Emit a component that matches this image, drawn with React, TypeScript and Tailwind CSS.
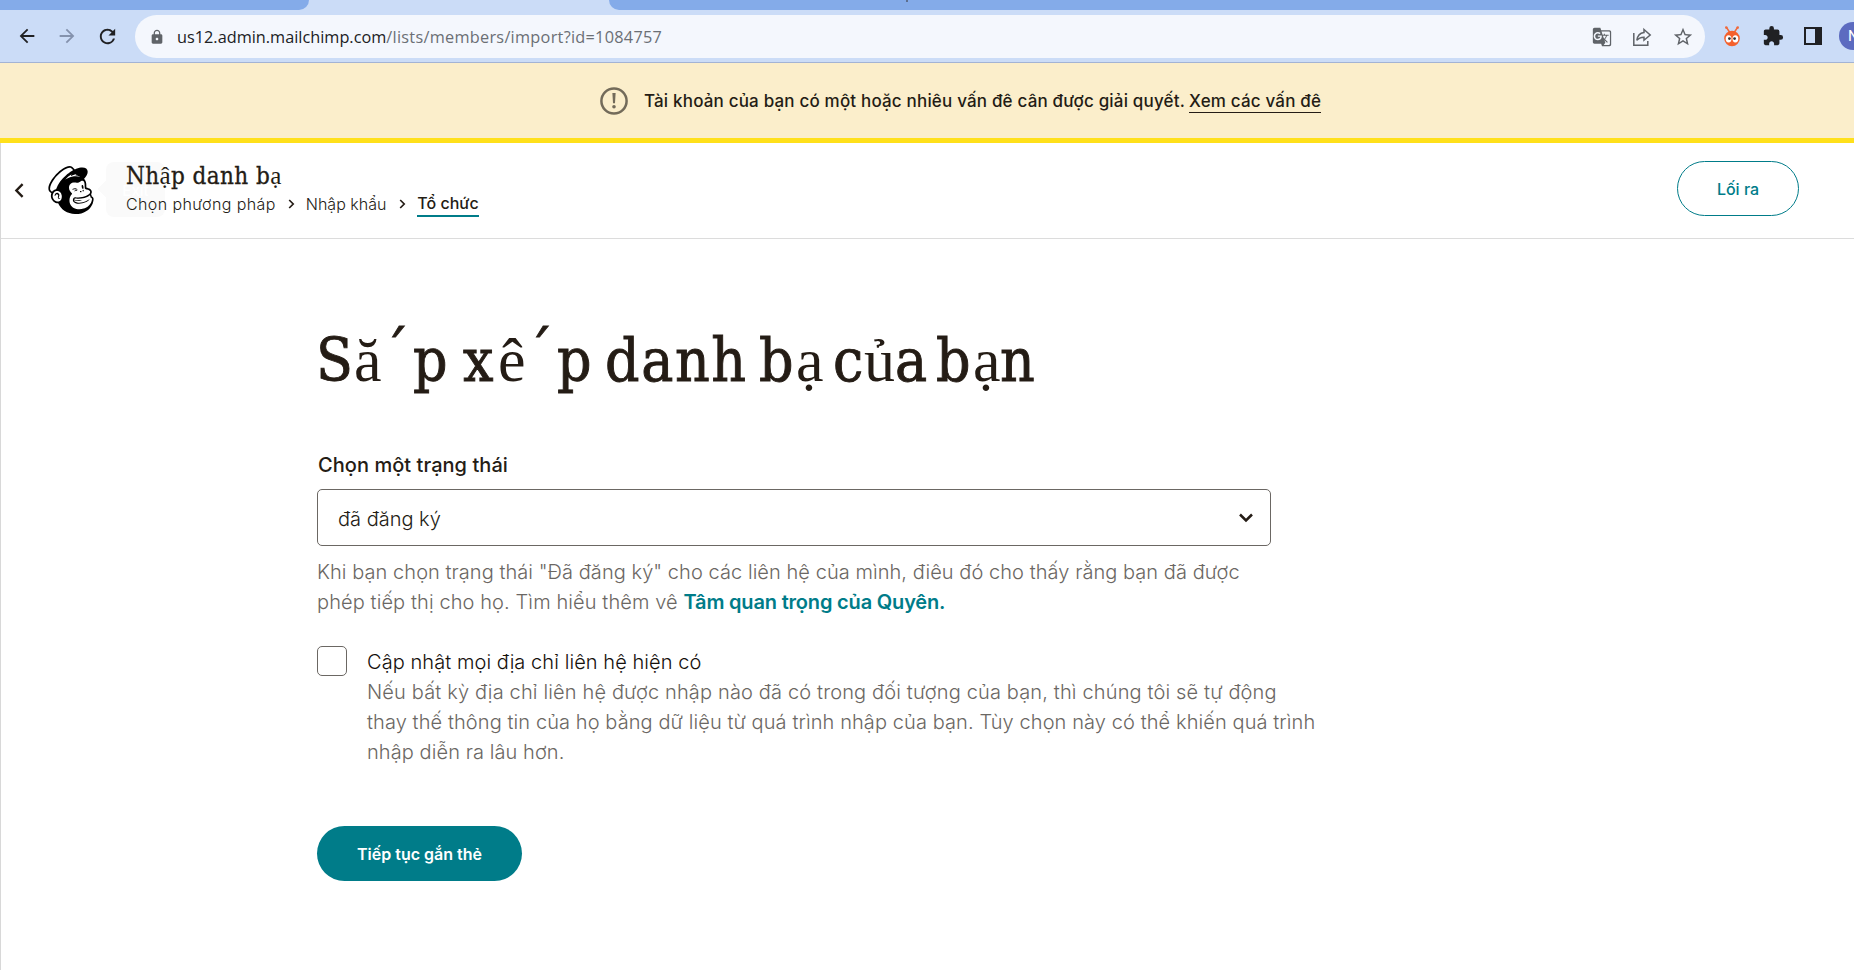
import { MdArrowBack, MdArrowForward, MdRefresh, MdLock, MdGTranslate, MdStarBorder, MdExtension } from "react-icons/md";
import { SiMailchimp } from "react-icons/si";

const display = "font-['DejaVu_Serif_Condensed','DejaVu_Serif',serif] [font-stretch:condensed]";
const bold = display + " [-webkit-text-stroke:0.9px_#241c15]";
const fallback = "font-['Liberation_Serif',serif] text-[62px]";

const titleRuns: { text: string; cls: string }[] = [
  { text: "S", cls: "w-[38px] " + bold },
  { text: "ă", cls: "w-[29px] " + fallback },
  { text: "´", cls: "w-[30px] -translate-x-[1px] -translate-y-[7px] " + bold },
  { text: "p ", cls: "w-[50px] " + bold },
  { text: "x", cls: "w-[35px] " + bold },
  { text: "ê", cls: "w-[29px] " + fallback },
  { text: "´", cls: "w-[30px] -translate-x-[1px] -translate-y-[7px] " + bold },
  { text: "p ", cls: "w-[48px] " + bold },
  { text: "danh ", cls: "w-[154px] tracking-[1.6px] " + bold },
  { text: "b", cls: "w-[37px] " + bold },
  { text: "ạ ", cls: "w-[37px] " + fallback },
  { text: "c", cls: "w-[31px] " + bold },
  { text: "ủ", cls: "w-[31px] " + fallback },
  { text: "a ", cls: "w-[41px] " + bold },
  { text: "b", cls: "w-[37px] " + bold },
  { text: "ạ", cls: "w-[27px] " + fallback },
  { text: "n", cls: "w-[37px] " + bold },
];

function ShareIcon() {
  return (
    <svg width="20" height="20" viewBox="0 0 20 20" fill="none" stroke="#5f6368" strokeWidth="1.5">
      <path d="M1.8 6v12.2h14V14" />
      <path d="M12 2.5 18.2 8 12 13.2V10.2C8.6 10.2 6.4 11.2 4.8 13.4 5.4 9 8 6 12 5.5Z" />
    </svg>
  );
}

function BugIcon() {
  return (
    <svg className="shrink-0" width="18" height="21" viewBox="0 0 18 21">
      <path d="M3.5 1.5 6.5 6M14.5 1.5 11.5 6" stroke="#f0693a" strokeWidth="1.5" />
      <circle cx="3.3" cy="1.6" r="1.3" fill="#f0693a" />
      <circle cx="14.7" cy="1.6" r="1.3" fill="#f0693a" />
      <circle cx="9" cy="12.5" r="7.8" fill="#f4602c" />
      <ellipse cx="5.6" cy="12.8" rx="2.9" ry="3.6" fill="#fff" />
      <ellipse cx="12.4" cy="12.8" rx="2.9" ry="3.6" fill="#fff" />
      <circle cx="6.4" cy="12.6" r="1.4" fill="#333" />
      <circle cx="11.6" cy="12.6" r="1.4" fill="#333" />
    </svg>
  );
}

function BrowserBar() {
  return (
    <div className="h-[63px] border-b border-[#a3b3d4] bg-[#cbdcf7]">
      <div className="flex h-[10px]">
        <div className="w-[309px] rounded-br-[10px] bg-[#84abe9]" />
        <div className="w-[300px]" />
        <div className="flex-1 rounded-bl-[10px] bg-[#84abe9] pl-[297px]">
          <div className="h-[2px] w-[2px] bg-[#5d6f8f]" />
        </div>
      </div>
      <div className="flex h-[52px] items-center overflow-hidden">
        <div className="flex w-[135px] shrink-0 items-center pl-[16px] text-[#202124]">
          <MdArrowBack size={22} />
          <MdArrowForward size={22} className="ml-[18px] text-[#8492ad]" />
          <MdRefresh size={23} className="ml-[18px]" />
        </div>
        <div className="mt-[1px] flex h-[43px] w-[1570px] shrink-0 items-center rounded-full bg-[#f4f7fd] pl-[14px] pr-[11px]">
          <MdLock size={16} className="text-[#5f6368]" />
          <div className="ml-[12px] flex-1 whitespace-nowrap pt-px font-['Open_Sans',sans-serif] text-[16.3px] text-[#202124]">
            us12.admin.mailchimp.com<span className="tracking-[0.27px] text-[#6b6f75]">/lists/members/import?id=1084757</span>
          </div>
          <div className="flex items-center gap-[20px] text-[#5f6368]">
            <MdGTranslate size={20} />
            <ShareIcon />
            <MdStarBorder size={22} />
          </div>
        </div>
        <div className="flex flex-1 items-center pl-[18px] text-[#202124]">
          <BugIcon />
          <MdExtension size={22} className="ml-[21px] shrink-0" />
          <div className="ml-[20px] h-[18px] w-[18px] shrink-0 border-2 border-r-[7px] border-[#202124]" />
          <div className="ml-[17px] flex h-[28px] w-[28px] shrink-0 items-center rounded-full bg-[#5c6bc0] pl-[9px] font-['Roboto',sans-serif] text-[15px] text-white">
            N
          </div>
        </div>
      </div>
    </div>
  );
}

function CrumbArrow({ className }: { className: string }) {
  return (
    <svg className={className} width="7" height="10" viewBox="0 0 7 10" fill="none" stroke="#241c15" strokeWidth="1.7">
      <path d="M1.2 1 5.2 5 1.2 9" />
    </svg>
  );
}

export default function App() {
  return (
    <div className="flex h-[970px] w-[1854px] flex-col overflow-hidden bg-white font-['Inter',sans-serif] text-[#241c15]">
      <BrowserBar />
      <div className="flex h-[80px] items-center border-b-[5px] border-[#ffe01b] bg-[#fbeecb] pl-[600px] text-[17px] font-medium tracking-[0.18px]">
        <svg width="28" height="28" viewBox="0 0 28 28" fill="none" stroke="#736b5a">
          <circle cx="14" cy="14" r="12.6" strokeWidth="2.5" />
          <path d="M12.4 6h3.2l-.6 10.2h-2z" fill="#736b5a" stroke="none" />
          <circle cx="14" cy="19.8" r="1.8" fill="#736b5a" stroke="none" />
        </svg>
        <span className="ml-[16px] mt-[3px] whitespace-nowrap">
          Tài khoản của bạn có một hoặc nhiêu vấn đê cân được giải quyết.
        </span>
        <a className="ml-[4px] mt-[2px] h-[23px] whitespace-nowrap border-b border-[#241c15] leading-[23px]">Xem các vấn đê</a>
      </div>

      <div className="flex flex-1 flex-col border-l border-[#d8d8d8]">
        <header className="flex h-[96px] border-b border-[#dcdcdc]">
          <svg className="ml-[13px] mt-[40px]" width="10" height="15" viewBox="0 0 10 15" fill="none" stroke="#241c15" strokeWidth="2.4">
            <path d="M8.6 1.2 2.4 7.5 8.6 13.8" />
          </svg>
          <SiMailchimp className="ml-[23px] mt-[23px] text-black" size={48} />
          <div className="relative ml-[31px] mt-[17px] w-[600px]">
            <div className="absolute -left-[26px] top-[23px] h-3 w-3 rotate-45 bg-[#fafafa]" />
            <div className="absolute -left-[20px] top-[2px] flex h-[55px] w-[59px] items-center justify-center rounded-lg bg-[#fafafa] pt-1 text-[15px] font-medium text-white">
              Exit
            </div>
            <div className={"relative flex h-[32px] items-baseline whitespace-pre text-[24px] leading-[32px] tracking-[0.4px] " + display}>
              <span className="[-webkit-text-stroke:0.3px_#241c15]">Nh</span>
              <span className="font-['Liberation_Serif',serif] text-[25px]">ậ</span>
              <span className="[-webkit-text-stroke:0.3px_#241c15]">p danh b</span>
              <span className="font-['Liberation_Serif',serif] text-[25px]">ạ</span>
            </div>
            <div className="relative flex h-[24px] items-center whitespace-nowrap text-[16px] font-light">
              <span className="tracking-[0.4px]">Chọn phương pháp</span>
              <CrumbArrow className="ml-[12px]" />
              <span className="ml-[11px]">Nhập khẩu</span>
              <CrumbArrow className="ml-[13px]" />
              <span className="ml-[11px] mt-[1px] h-[25px] border-b-2 border-[#007c89] font-medium leading-[22px]">Tổ chức</span>
            </div>
          </div>
          <button className="ml-auto mr-[55px] mt-[18px] h-[55px] w-[122px] rounded-full border border-[#007c89] text-[16px] font-medium text-[#007c89]">
            Lối ra
          </button>
        </header>

        <main className="pl-[316px]">
          <h1 className="-ml-px mt-[79px] flex h-[84px] items-baseline whitespace-pre text-[60px] leading-[84px]">
            {titleRuns.map((r, i) => (
              <span key={i} className={r.cls}>{r.text}</span>
            ))}
          </h1>
          <div className="mt-[48px] pl-px text-[20px] font-medium leading-[30px] tracking-[0.05px]">Chọn một trạng thái</div>
          <div className="mt-[9px] flex h-[57px] w-[954px] items-center justify-between rounded-[5px] border border-[#6b6763] pl-[20px] pr-[17px] text-[20px] font-light">
            <span className="pt-[3px]">đã đăng ký</span>
            <svg width="14" height="10" viewBox="0 0 14 10" fill="none" stroke="#241c15" strokeWidth="2.5">
              <path d="M1 1.5 7 7.5 13 1.5" />
            </svg>
          </div>
          <p className="mt-[11px] whitespace-nowrap text-[20px] font-light leading-[30px] tracking-[0.055px] text-[#6b6763]">
            Khi bạn chọn trạng thái "Đã đăng ký" cho các liên hệ của mình, điêu đó cho thấy rằng bạn đã được
            <br />
            <span className="tracking-[0.1px]">phép tiếp thị cho họ. Tìm hiểu thêm vê </span>
            <a className="font-semibold tracking-[-0.18px] text-[#007c89]">Tâm quan trọng của Quyên.</a>
          </p>
          <div className="mt-[29px] flex">
            <div className="h-[30px] w-[30px] rounded-[5px] border border-[#6b6763]" />
            <div className="ml-[20px] whitespace-nowrap pt-px text-[20px] font-light leading-[30px] text-[#6b6763]">
              <div className="tracking-[0.07px] text-[#15100c]">Cập nhật mọi địa chỉ liên hệ hiện có</div>
              <div className="tracking-[0.15px]">Nếu bất kỳ địa chỉ liên hệ được nhập nào đã có trong đối tượng của bạn, thì chúng tôi sẽ tự động</div>
              <div className="tracking-[0.09px]">thay thế thông tin của họ bằng dữ liệu từ quá trình nhập của bạn. Tùy chọn này có thể khiến quá trình</div>
              <div className="tracking-[0.08px]">nhập diễn ra lâu hơn.</div>
            </div>
          </div>
          <div className="pt-[59px]">
            <button className="h-[55px] w-[205px] rounded-full bg-[#007c89] text-[16px] font-semibold text-white">
              Tiếp tục gắn thẻ
            </button>
          </div>
        </main>
      </div>
    </div>
  );
}
